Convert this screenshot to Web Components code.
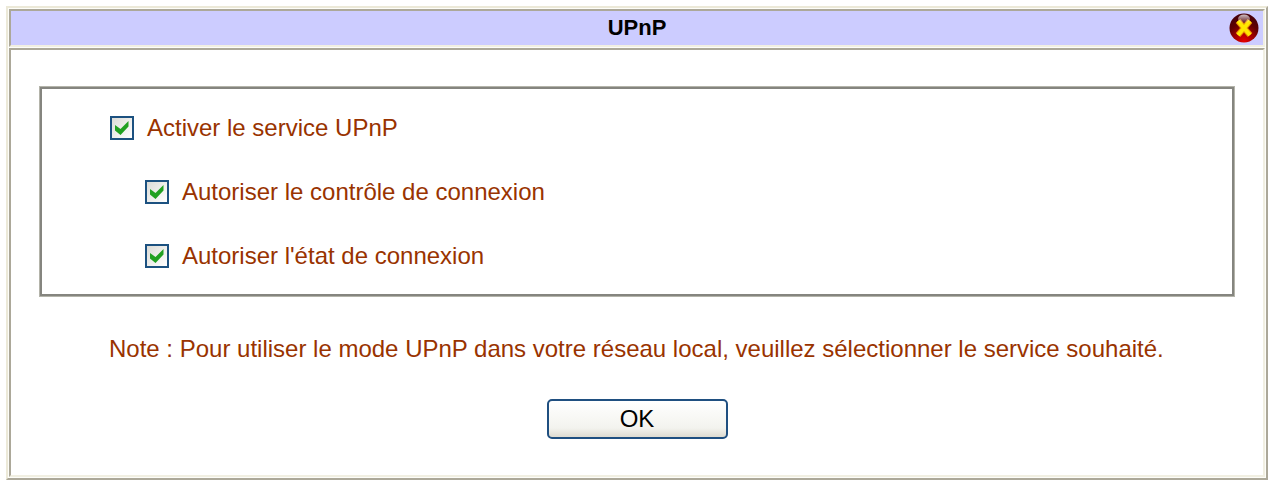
<!DOCTYPE html>
<html lang="fr">
<head>
<meta charset="utf-8">
<meta name="viewport" content="width=device-width, initial-scale=1">
<title>UPnP</title>
<style>
    body {
        margin: 6px 2px 0 6px;
        background: #fff;
        color: #993300;
        font-family: "Liberation Sans", Arial, sans-serif;
        font-size: 24px;
        line-height: 24px;
    }
</style>
</head>
<body>
<dialog-panel heading="UPnP">
    <option-group>
        <check-option name="service">Activer le service UPnP</check-option>
        <check-option name="control" nested>Autoriser le contrôle de connexion</check-option>
        <check-option name="status" nested>Autoriser l'état de connexion</check-option>
    </option-group>
    <note-text>Note : Pour utiliser le mode UPnP dans votre réseau local, veuillez sélectionner le service souhaité.</note-text>
    <push-button>OK</push-button>
</dialog-panel>

<script>
class DialogPanel extends HTMLElement {
    constructor() {
        super();
        this.attachShadow({ mode: 'open' });
    }

    connectedCallback() {
        this.render();
        this.shadowRoot.querySelector('button').addEventListener('click', () => {
            this.hidden = true;
        });
    }

    render() {
        this.shadowRoot.innerHTML = `
            <style>
                :host {
                    display: flex;
                    flex-direction: column;
                    gap: 1px;
                    padding: 1px;
                    border: 2px solid;
                    border-color: #ece9d8 #aca899 #aca899 #ece9d8;
                    background: #fdfdf8;
                }
                :host([hidden]) {
                    display: none;
                }
                header, main {
                    border: 2px solid;
                    border-color: #aca899 #f1efe2 #f1efe2 #aca899;
                }
                header {
                    display: grid;
                    grid-template-columns: 32px 1fr 32px;
                    align-items: center;
                    height: 34px;
                    padding: 0 3px;
                    background: #ccccff;
                    background-clip: padding-box;
                }
                h1 {
                    grid-column: 2;
                    margin: 0;
                    color: #000;
                    font-size: 22px;
                    line-height: 24px;
                    text-align: center;
                }
                button {
                    justify-self: end;
                    width: 32px;
                    height: 32px;
                    padding: 0;
                    border: 0;
                    background: none;
                    cursor: pointer;
                }
                svg {
                    display: block;
                    margin: auto;
                }
                main {
                    display: flex;
                    flex-direction: column;
                    padding: 36px 28px;
                    background: #fff;
                }
            </style>
            <header>
                <h1></h1>
                <button type="button" aria-label="Fermer">
                    <svg width="30" height="30" viewBox="0 0 30 30">
                        <defs>
                            <radialGradient id="ball" cx="50%" cy="95%" r="85%">
                                <stop offset="0" stop-color="#e60000"/>
                                <stop offset=".4" stop-color="#a00000"/>
                                <stop offset=".7" stop-color="#600000"/>
                                <stop offset="1" stop-color="#480008"/>
                            </radialGradient>
                            <linearGradient id="shine" x1="0" y1="0" x2="0" y2="1">
                                <stop offset="0" stop-color="#fff" stop-opacity=".75"/>
                                <stop offset="1" stop-color="#fff" stop-opacity=".05"/>
                            </linearGradient>
                        </defs>
                        <circle cx="15" cy="15" r="14.5" fill="url(#ball)"/>
                        <path d="M9 8 21 22M21 8 9 22" stroke="#e88b00" stroke-width="6"/>
                        <path d="M9 8 21 22M21 8 9 22" stroke="#ffe800" stroke-width="4"/>
                        <ellipse cx="15" cy="6" rx="6" ry="4.5" fill="url(#shine)"/>
                    </svg>
                </button>
            </header>
            <main><slot></slot></main>
        `;
        this.shadowRoot.querySelector('h1').textContent = this.getAttribute('heading');
    }
}

class OptionGroup extends HTMLElement {
    constructor() {
        super();
        this.attachShadow({ mode: 'open' });
        this.shadowRoot.innerHTML = `
            <style>
                :host {
                    display: flex;
                    flex-direction: column;
                    gap: 40px;
                    padding: 29px 70px 28px;
                    border: 1px solid #b4b4aa;
                    outline: 2px solid #85857f;
                    outline-offset: -3px;
                }
            </style>
            <slot></slot>
        `;
    }
}

class CheckOption extends HTMLElement {
    constructor() {
        super();
        this.attachShadow({ mode: 'open' });
        this.shadowRoot.innerHTML = `
            <style>
                :host {
                    display: flex;
                }
                :host([nested]) {
                    padding-left: 35px;
                }
                label {
                    display: flex;
                    align-items: center;
                    gap: 13px;
                }
                .box {
                    display: grid;
                    width: 24px;
                    height: 24px;
                }
                input, svg {
                    grid-area: 1 / 1;
                }
                input {
                    appearance: none;
                    box-sizing: border-box;
                    width: 24px;
                    height: 24px;
                    margin: 0;
                    border: 2px solid #1c5180;
                    background: linear-gradient(135deg, #dcdcd7, #fff);
                }
                svg {
                    pointer-events: none;
                }
                input:not(:checked) + svg {
                    visibility: hidden;
                }
            </style>
            <label>
                <span class="box">
                    <input type="checkbox" checked>
                    <svg width="24" height="24" viewBox="0 0 24 24">
                        <path d="M5 9 10.5 13 18.5 5V10.5L10.5 19 5 14.5Z" fill="#21a121"/>
                    </svg>
                </span>
                <span><slot></slot></span>
            </label>
        `;
    }

    connectedCallback() {
        this.shadowRoot.querySelector('input').name = this.getAttribute('name');
    }
}

class NoteText extends HTMLElement {
    constructor() {
        super();
        this.attachShadow({ mode: 'open' });
        this.shadowRoot.innerHTML = `
            <style>
                :host {
                    display: block;
                    padding: 40px 0 38px 70px;
                }
            </style>
            <slot></slot>
        `;
    }
}

class PushButton extends HTMLElement {
    constructor() {
        super();
        this.attachShadow({ mode: 'open' });
        this.shadowRoot.innerHTML = `
            <style>
                :host {
                    display: block;
                    align-self: center;
                }
                button {
                    display: block;
                    width: 181px;
                    height: 40px;
                    padding: 0;
                    border: 2px solid #1f4f80;
                    border-radius: 5px;
                    background: linear-gradient(#fff, #f3f3ee 75%, #dedbd0);
                    color: #000;
                    font: inherit;
                }
            </style>
            <button type="button"><slot></slot></button>
        `;
    }
}

customElements.define('dialog-panel', DialogPanel);
customElements.define('option-group', OptionGroup);
customElements.define('check-option', CheckOption);
customElements.define('note-text', NoteText);
customElements.define('push-button', PushButton);
</script>
</body>
</html>
